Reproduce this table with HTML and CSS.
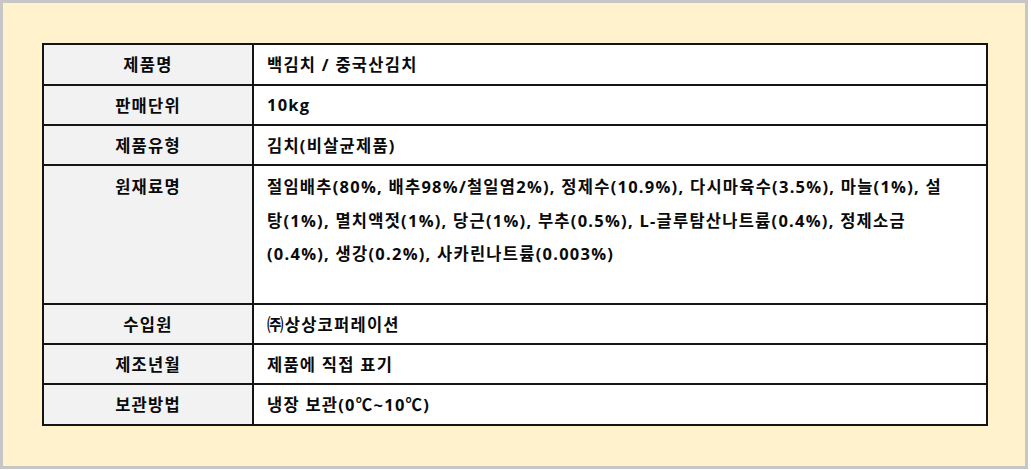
FILE: index.html
```html
<!DOCTYPE html>
<html lang="ko">
<head>
<meta charset="utf-8">
<link rel="stylesheet" href="styles.css">
</head>
<body>
<div class="frame">
  <div class="sheet">
    <div class="cell label">제품명</div>
    <div class="cell value">백김치 / 중국산김치</div>
    <div class="cell label">판매단위</div>
    <div class="cell value">10kg</div>
    <div class="cell label">제품유형</div>
    <div class="cell value">김치(비살균제품)</div>
    <div class="cell label top">원재료명</div>
    <div class="cell value top multi">절임배추(80%, 배추98%/철일염2%), 정제수(10.9%), 다시마육수(3.5%), 마늘(1%), 설<br>탕(1%), 멸치액젓(1%), 당근(1%), 부추(0.5%), L-글루탐산나트륨(0.4%), 정제소금<br>(0.4%), 생강(0.2%), 사카린나트륨(0.003%)</div>
    <div class="cell label">수입원</div>
    <div class="cell value">㈜상상코퍼레이션</div>
    <div class="cell label">제조년월</div>
    <div class="cell value">제품에 직접 표기</div>
    <div class="cell label">보관방법</div>
    <div class="cell value">냉장 보관(0℃~10℃)</div>
  </div>
</div>
</body>
</html>
```
FILE: styles.css
```css
html, body {
  margin: 0;
  padding: 0;
  background: #ffffff;
}
.frame {
  box-sizing: border-box;
  width: 1028px;
  height: 469px;
  border: 3px solid #c6c6c6;
  background: #fff2cc;
  padding: 40px 0 0 39px;
}
.sheet {
  box-sizing: border-box;
  width: 946px;
  display: grid;
  grid-template-columns: 208px 732px;
  grid-template-rows: 39px 38px 38px 137px 38px 38px 39px;
  gap: 2px;
  border: 2px solid #141414;
  background: #141414;
  font-family: "Open Sans", "Noto Sans CJK KR", sans-serif;
  font-weight: 700;
  font-size: 16.5px;
  letter-spacing: 1.25px;
  color: #0a0a0a;
}
.cell {
  display: flex;
  align-items: center;
  white-space: nowrap;
}
.label {
  background: #f2f2f2;
  justify-content: center;
  padding-bottom: 1px;
}
.value {
  background: #ffffff;
  padding-left: 13px;
  padding-bottom: 1px;
}
.top {
  align-items: flex-start;
  padding-top: 4px;
  line-height: 33.5px;
}
.multi {
  display: block;
}
```
